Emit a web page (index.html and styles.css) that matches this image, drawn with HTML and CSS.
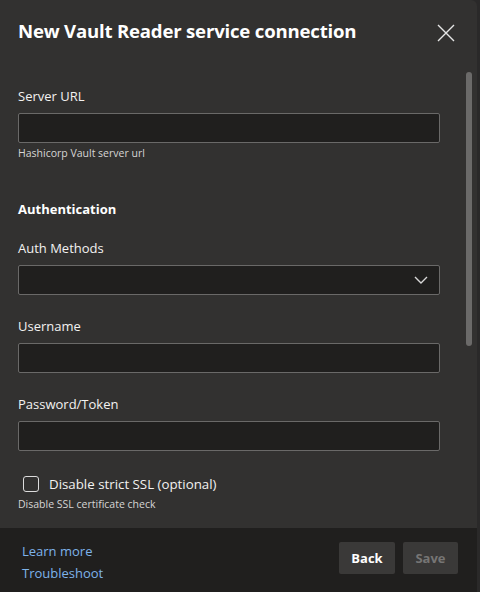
FILE: index.html
```html
<!DOCTYPE html>
<html lang="en">
<head>
<meta charset="utf-8">
<title>New Vault Reader service connection</title>
<link rel="stylesheet" href="styles.css">
</head>
<body>
<div class="dialog">
  <div class="header">
    <h1 class="title">New Vault Reader service connection</h1>
    <button class="close" aria-label="Close">
      <svg width="18" height="18" viewBox="0 0 18 18"><path d="M1 1L17 17M17 1L1 17" stroke="#e6e6e6" stroke-width="1.4" fill="none"/></svg>
    </button>
  </div>
  <div class="content">
    <div class="form">
      <label class="label">Server URL</label>
      <div class="input"></div>
      <div class="help">Hashicorp Vault server url</div>

      <div class="section">Authentication</div>

      <label class="label first">Auth Methods</label>
      <div class="input select">
        <svg width="14" height="8" viewBox="0 0 14 8"><path d="M1 1L7 7L13 1" stroke="#d8d8d8" stroke-width="1.4" fill="none"/></svg>
      </div>

      <label class="label">Username</label>
      <div class="input"></div>

      <label class="label">Password/Token</label>
      <div class="input"></div>

      <div class="check-row">
        <span class="checkbox"></span>
        <span class="check-text">Disable strict SSL (optional)</span>
      </div>
      <div class="help">Disable SSL certificate check</div>
    </div>
    <div class="scroll-thumb"></div>
  </div>
  <div class="footer">
    <div class="links">
      <a class="link">Learn more</a>
      <a class="link">Troubleshoot</a>
    </div>
    <div class="buttons">
      <button class="btn back">Back</button>
      <button class="btn save">Save</button>
    </div>
  </div>
</div>
</body>
</html>
```

FILE: styles.css
```css
* { box-sizing: border-box; }
html, body { margin: 0; padding: 0; }
body {
  width: 480px;
  height: 592px;
  background: #2a2929;
  font-family: "Open Sans", "Noto Sans", sans-serif;
  color: #f3f2f1;
  overflow: hidden;
}
.dialog {
  width: 477px;
  height: 592px;
  background: #323130;
  border-radius: 0 6px 0 0;
  display: flex;
  flex-direction: column;
  overflow: hidden;
}
.header {
  height: 64px;
  display: flex;
  align-items: flex-start;
  justify-content: space-between;
  padding: 17px 22px 0 18px;
  flex: none;
}
.title {
  margin: 0;
  font-size: 18.6px;
  line-height: 28px;
  font-weight: 700;
  letter-spacing: -0.2px;
  color: #ffffff;
}
.close {
  background: none;
  border: none;
  padding: 0;
  margin-top: 7px;
  width: 18px;
  height: 18px;
  display: flex;
}
.content {
  flex: 1;
  position: relative;
  overflow: hidden;
}
.form {
  padding: 22px 37px 0 18px;
  display: flex;
  flex-direction: column;
}
.label {
  font-size: 13px;
  line-height: 20px;
  font-weight: 500;
  color: #f3f2f1;
  margin: 21px 0 7px;
}
.form > .label:first-child { margin-top: 0; }
.label.first { margin-top: 19px; }
.input {
  height: 30px;
  background: #201f1e;
  border: 1px solid #6a6968;
  border-radius: 2px;
}
.select {
  display: flex;
  align-items: center;
  justify-content: flex-end;
  padding-right: 11px;
}
.help {
  font-size: 10.5px;
  line-height: 16px;
  margin-top: 2px;
  color: #d6d5d4;
}
.section {
  margin-top: 38px;
  font-size: 13px;
  line-height: 20px;
  font-weight: 700;
  color: #ffffff;
}
.check-row {
  display: flex;
  align-items: center;
  margin-top: 23px;
  height: 20px;
  padding-left: 5px;
}
.checkbox {
  width: 16px;
  height: 16px;
  border: 1px solid #dcdcdc;
  border-radius: 3px;
  margin-right: 10px;
}
.check-text {
  font-size: 13.3px;
  line-height: 20px;
  color: #f3f2f1;
}
.check-row + .help { margin-top: 2px; }
.scroll-thumb {
  position: absolute;
  right: 5px;
  top: 8px;
  width: 6px;
  height: 274px;
  border-radius: 3px;
  background: #6b6a69;
}
.footer {
  flex: none;
  height: 64px;
  background: #201f1e;
  display: flex;
  justify-content: space-between;
  align-items: center;
  padding: 0 19px 0 22px;
}
.links {
  display: flex;
  flex-direction: column;
  padding-top: 4px;
}
.link {
  font-size: 13px;
  line-height: 22px;
  color: #7eb3ea;
}
.buttons {
  display: flex;
  gap: 8px;
  margin-top: -4px;
}
.btn {
  height: 32px;
  border: none;
  border-radius: 2px;
  background: #3a3938;
  font-family: "Open Sans", "Noto Sans", sans-serif;
  font-size: 13px;
  font-weight: 700;
  padding: 0;
}
.back { width: 56px; color: #ffffff; }
.save { width: 55px; color: #767574; }
```
